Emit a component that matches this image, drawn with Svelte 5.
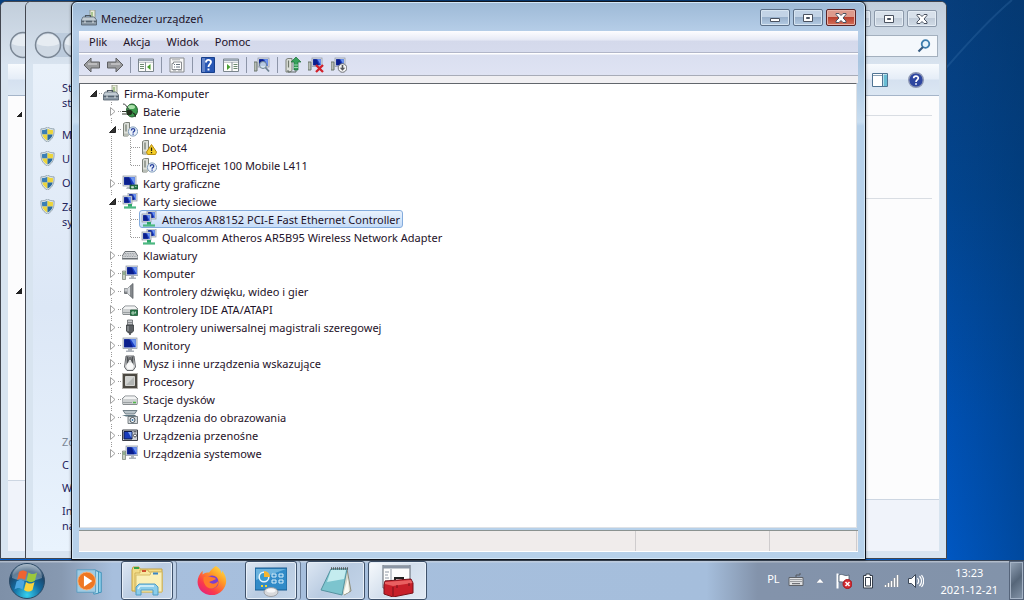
<script>
    let selected = "Atheros AR8152 PCI-E Fast Ethernet Controller";

    const menus = ["Plik", "Akcja", "Widok", "Pomoc"];

    const tools = [
        [{icon: "back", label: "Wstecz"}, {icon: "forward", label: "Dalej"}],
        [{icon: "treepane", label: "Drzewo konsoli"}],
        [{icon: "props", label: "Właściwości"}],
        [{icon: "help", label: "Pomoc"}, {icon: "actionpane", label: "Okienko akcji"}],
        [{icon: "scan", label: "Skanuj"}],
        [{icon: "update", label: "Aktualizuj"}, {icon: "uninstall", label: "Odinstaluj"}, {icon: "disable", label: "Wyłącz"}],
    ];

    const rows = [
        {level: 0, icon: "toolbox", name: "Firma-Komputer", open: true},
        {level: 1, icon: "battery", name: "Baterie"},
        {level: 1, icon: "unknown", name: "Inne urządzenia", open: true},
        {level: 2, icon: "warning", name: "Dot4"},
        {level: 2, icon: "unknown", name: "HPOfficejet 100 Mobile L411", last: true},
        {level: 1, icon: "gpu", name: "Karty graficzne"},
        {level: 1, icon: "network", name: "Karty sieciowe", open: true},
        {level: 2, icon: "network", name: "Atheros AR8152 PCI-E Fast Ethernet Controller"},
        {level: 2, icon: "network", name: "Qualcomm Atheros AR5B95 Wireless Network Adapter", last: true},
        {level: 1, icon: "keyboard", name: "Klawiatury"},
        {level: 1, icon: "computer", name: "Komputer"},
        {level: 1, icon: "sound", name: "Kontrolery dźwięku, wideo i gier"},
        {level: 1, icon: "ide", name: "Kontrolery IDE ATA/ATAPI"},
        {level: 1, icon: "usb", name: "Kontrolery uniwersalnej magistrali szeregowej"},
        {level: 1, icon: "monitor", name: "Monitory"},
        {level: 1, icon: "mouse", name: "Mysz i inne urządzenia wskazujące"},
        {level: 1, icon: "cpu", name: "Procesory"},
        {level: 1, icon: "disk", name: "Stacje dysków"},
        {level: 1, icon: "imaging", name: "Urządzenia do obrazowania"},
        {level: 1, icon: "portable", name: "Urządzenia przenośne"},
        {level: 1, icon: "computer", name: "Urządzenia systemowe", last: true},
    ];
</script>

{#snippet screen(x, y, w, h)}
    <rect {x} {y} width={w} height={h} fill="#dfe3ea" stroke="#8b939f" stroke-width=".7" />
    <rect x={x + 1.2} y={y + 1.2} width={w - 2.4} height={h - 2.4} fill="#1c3fc4" />
    <path d="M{x + 1.2} {y + 1.2}h{(w - 2.4) * 0.45}l{(w - 2.4) * 0.3} {h - 2.4}h-{(w - 2.4) * 0.75}z" fill="#0b1f8c" />
    <path d="M{x + w * 0.55} {y + 1.2}h{w * 0.45 - 1.2}v{h - 2.4}z" fill="#6f97f0" />
{/snippet}

{#snippet tower(x)}
    <path d="M{x} 2.5l2-1h4v12l-2 1.500h-4z" fill="#dcdfd9" stroke="#7c8179" />
    <path d="M{x + 2.500} 3.500v7" stroke="#6f776c" stroke-width="1.200" />
{/snippet}

{#snippet icon(name)}
    <svg class="icon" viewBox="0 0 16 16" aria-hidden="true">
        {#if name === "toolbox"}
            <path d="M9 0h5v9H9z" fill="#e9ecd9" stroke="#8b907f" stroke-width=".8" />
            <path d="M11 2v5" stroke="#6ca04a" />
            <path d="M4.500 7V5.500h5V7" fill="none" stroke="#4b5660" stroke-width="1.200" />
            <path d="M2 7h11l2.500 3v5H.5v-5z" fill="#8d9ba7" stroke="#4f5c68" stroke-width=".8" />
            <path d="M2 7.500h11l2 2.500H1z" fill="#c2ccd3" />
            <path d="M.5 11.500h15" stroke="#56636f" />
            <path d="M4 10.500v2.500M12 10.500v2.500" stroke="#e1e6e9" />
        {:else if name === "battery"}
            <ellipse cx="10" cy="7.500" rx="5.500" ry="6.500" fill="#3b9a4c" stroke="#235d2d" />
            <ellipse cx="9.500" cy="4" rx="3.500" ry="2" fill="#a9e0a8" />
            <path d="M1 1c3 0 3 2 4 3s2 2 2 4" fill="none" stroke="#444" />
            <path d="M5 7h4l2 2-2 3H5z" fill="#22301f" />
            <path d="M0 8.500h5M0 11h5" stroke="#30382e" stroke-width="1.200" />
            <path d="M11 10c2 1 3 2 2 4" fill="none" stroke="#22301f" stroke-width="1.300" />
        {:else if name === "unknown" || name === "warning"}
            {@render tower(1.5)}
            <path d="M2 12.500h5v2.500H2z" fill="#b8bdb5" />
            {#if name === "unknown"}
                <circle cx="11" cy="10.500" r="4.600" fill="#eaf1fa" stroke="#7f9bb9" />
                <path d="M9.400 9.400c0-2.400 3.400-2.200 3.300-.2 0 1.200-1.600 1.300-1.600 2.500M11.100 12.500v1.200" fill="none" stroke="#263f9c" stroke-width="1.300" />
            {:else}
                <path d="M10.500 5.500l5 7.500-1 2.500h-8l-1-2.500z" fill="#f5cf27" stroke="#b98c12" />
                <path d="M10.500 8.500v3.500M10.500 13v1.200" stroke="#29220a" stroke-width="1.300" />
            {/if}
        {:else if name === "gpu"}
            {@render screen(1, 1, 13, 10)}
            <path d="M5 12h4l1 2H4z" fill="#b4bac2" />
            <path d="M8 10h8v4H8z" fill="#287a4a" stroke="#174f2c" stroke-width=".7" />
            <path d="M9.500 11.500h2v1.500h-2zM13 11.500h1.500" fill="#d3e6d5" stroke="#c7dcca" stroke-width=".7" />
        {:else if name === "network"}
            {@render screen(6, 0, 9, 8)}
            {@render screen(1, 3, 9, 8)}
            <path d="M6 11h4v2.500h4v2H2v-2h4z" fill="#2da56a" />
            <path d="M2 14h12" stroke="#86dbac" stroke-width=".7" />
        {:else if name === "keyboard"}
            <path d="M3 4.500h10l3 5V12H0V9.500z" fill="#d6d8da" stroke="#6b7075" />
            <path d="M3 6.500h10M2.500 8h11M1.500 9.500h13" stroke="#9a9fa5" stroke-dasharray="1 .7" />
            <path d="M.5 11.500h15" stroke="#6b7075" />
        {:else if name === "computer"}
            {@render screen(4, 1, 12, 9.500)}
            <path d="M9 10.500h3v2h2v1.500H7v-1.500h2z" fill="#adb3bb" />
            <path d="M.5 6h3v8.500h-3z" fill="#c7cec4" stroke="#737c70" stroke-width=".7" />
            <path d="M2 7v3" stroke="#599256" />
        {:else if name === "sound"}
            <path d="M2.500 5.500h3L11 .5v15l-5.500-5h-3z" fill="#85898d" stroke="#5a5f64" stroke-width=".8" />
            <path d="M5.500 5.500L8 3.300v9.400l-2.500-2.200z" fill="#d7dadd" />
            <path d="M2.500 5.500h3v3h-3z" fill="#c6c9cc" />
        {:else if name === "ide" || name === "disk"}
            <path d="M3 5h10l3 3v4.500l-1 1H1l-1-1V8z" fill="#cdd0d1" stroke="#7b8083" stroke-width=".9" />
            <path d="M3 5.500h10l2 2.500H1z" fill="#f2f3f3" />
            <path d="M1 11.500h9" stroke="#9ba0a2" />
            {#if name === "ide"}
                <path d="M8.500 9h7v5.500h-7z" fill="#287a4a" stroke="#174f2c" stroke-width=".7" />
                <path d="M10 11h2v2h-2zM13.500 10.500v2" stroke="#d3e6d5" fill="none" stroke-width=".8" />
            {:else}
                <path d="M11 11.500h3" stroke="#4fb647" stroke-width="1.500" />
            {/if}
        {:else if name === "usb"}
            <path d="M5.500 1h5v5h-5z" fill="#c8cbce" stroke="#64686c" stroke-width=".8" />
            <path d="M7 3v1.200M9 3v1.200" stroke="#44484c" />
            <path d="M4.500 6h7v6l-2 2h-3l-2-2z" fill="#5b5f63" stroke="#34373a" stroke-width=".8" />
            <path d="M6 7v5" stroke="#a9adb0" />
            <path d="M8 14v2" stroke="#34373a" stroke-width="1.400" />
        {:else if name === "monitor"}
            {@render screen(1, 1, 14, 10.500)}
            <path d="M6 12h4v1.500h2V15H4v-1.500h2z" fill="#adb3bb" />
        {:else if name === "mouse"}
            <path d="M4 1h8l1.500 11-2.500 3.500H5L2.500 12z" fill="#d9dadb" stroke="#55585c" stroke-width=".9" />
            <path d="M4.500 1.500h2l.5 4-2.500 5zM11.500 1.500h-2l-.5 4 2.500 5z" fill="#4e5154" />
            <path d="M8 2v3" stroke="#47494c" stroke-width="1.500" />
            <ellipse cx="8" cy="11" rx="3.500" ry="3.500" fill="#fafafa" />
        {:else if name === "cpu"}
            <path d="M.5.500h15v15H.5z" fill="none" stroke="#6b675d" stroke-dasharray="1 1" />
            <path d="M1 1h14v14H1z" fill="#4c4942" />
            <path d="M3.500 3.500h9v9h-9z" fill="#d0d2d0" stroke="#e4e5e2" stroke-width=".8" />
            <path d="M12 4v8H4z" fill="#b2b5b3" />
        {:else if name === "imaging"}
            <path d="M1 1.500h14L12.500 5h-9z" fill="#b8c3c8" stroke="#586872" stroke-width=".8" />
            <path d="M0 6h13l2 1.500H4z" fill="#5d7681" />
            <path d="M6 7.500h9.500v7H6z" fill="#d5dadc" stroke="#5e666b" stroke-width=".8" />
            <circle cx="10.500" cy="11" r="2.500" fill="#fff" stroke="#46545e" />
            <circle cx="10.500" cy="11" r="1" fill="#3774a8" />
        {:else if name === "portable"}
            <path d="M.5 3h15v10.500H.5z" fill="#d1d4d8" stroke="#3b3e46" />
            <path d="M2 4.500h8v7.500H2z" fill="#173aba" stroke="#111c49" />
            <path d="M6 5h3.500v6z" fill="#7fa5f4" />
            <circle cx="13" cy="8.500" r="1.500" fill="#fff" stroke="#464950" />
            <path d="M11.500 4.800h3" stroke="#34363c" />
        {:else if name === "back" || name === "forward"}
            <path
                d={name === "back" ? "M0 8l7-7v4h8.500v6H7v4z" : "M16 8L9 1v4H.5v6H9v4z"}
                fill="#9a9b9d"
                stroke="#5f6063"
            />
            <path d="M4 7h9" stroke="#c8c9cb" stroke-width="1.500" />
        {:else if name === "treepane" || name === "actionpane"}
            <path d="M.5 2h15v12.500H.5z" fill="#fdfdfb" stroke="#7c868d" />
            <path d="M1 3.200h14" stroke="#98a5b4" stroke-width="2" />
            <path d="M1 5.500h14" stroke="#c8ccd0" />
            {#if name === "treepane"}
                <path d="M7.500 5v9" stroke="#8a9399" />
                <path d="M2 7.500h4M2 9.500h4M2 11.500h4" stroke="#6b8a70" />
                <path d="M12.500 7v6L9 10z" fill="#47a02f" />
            {:else}
                <path d="M9 5v9" stroke="#8a9399" />
                <path d="M10.500 7.500h4M10.500 9.500h4M10.500 11.500h4" stroke="#6b8a70" />
                <path d="M4 7v6l3.500-3z" fill="#47a02f" />
            {/if}
        {:else if name === "props"}
            <path d="M1 1h14v14H1z" fill="#f8f8f8" stroke="#85888c" />
            <path d="M3 2.800h8" stroke="#a9acb0" />
            <path d="M4.500 5h8v7.500H3V6.500h1.500z" fill="#fff" stroke="#898c90" />
            <path d="M5 7.500h1M7 7.500h4M5 10h1M7 10h4" stroke="#67727e" />
            <path d="M4 13.800h3M9 13.800h4" stroke="#a9acb0" />
        {:else if name === "help"}
            <path d="M1.500.5h13v15h-13z" fill="#2857b5" stroke="#173f8b" />
            <path d="M2 1h3v14H2z" fill="#6485c8" />
            <path d="M6 5.500c0-3.500 5-3.400 5-.4 0 2-2.500 2.200-2.500 4.900M8.500 11.500v2" fill="none" stroke="#fff" stroke-width="1.900" />
        {:else if name === "scan"}
            <path d="M0 5h3v9H0z" fill="#b8beb8" stroke="#6d766d" />
            {@render screen(4, 1, 11, 9)}
            <circle cx="9" cy="8" r="3.500" fill="#d6e7f2" fill-opacity=".85" stroke="#6d8190" />
            <path d="M11.500 10.500l3.500 4" stroke="#6d8190" stroke-width="1.800" />
        {:else if name === "update"}
            {@render tower(1)}
            <path d="M3 13v2h8v-2" fill="none" stroke="#5e6662" />
            <path d="M11 0l5 5h-3v8H9V5H6z" fill="#36a25b" stroke="#1e6c37" stroke-width=".7" />
            <path d="M9 8h4M9 10.500h4" stroke="#b8e7c5" stroke-width=".8" />
        {:else if name === "uninstall" || name === "disable"}
            <path d="M0 5h3v8H0z" fill="#b8beb8" stroke="#6d766d" />
            {@render screen(4, 1, 10, 8.500)}
            {#if name === "uninstall"}
                <path d="M8 8l7 7M15 8l-7 7" stroke="#d2202a" stroke-width="2.300" />
            {:else}
                <circle cx="11.500" cy="11" r="4.300" fill="#f4f4f4" stroke="#707377" />
                <path d="M11.500 8v4" stroke="#54575b" stroke-width="1.600" />
                <path d="M8.800 10.800h5.400l-2.700 3z" fill="#54575b" />
            {/if}
        {:else if name === "shield"}
            <path d="M8 0c2 1.500 4 2 7 2 .3 6-1 11-7 14C2 13 .7 8 1 2c3 0 5-.5 7-2z" fill="#dfe7ea" stroke="#7f929f" stroke-width=".8" />
            <path d="M8 1.800V8H2.500C2 6 2 4.500 2.300 3.300 4.500 3.300 6.500 2.800 8 1.800z" fill="#3b7fb5" />
            <path d="M8 1.800V8h5.500c.5-2 .5-3.500.2-4.700C11.500 3.300 9.500 2.800 8 1.800z" fill="#ecd53c" />
            <path d="M8 8v6.500C5 13 3.200 11 2.500 8z" fill="#ecd53c" />
            <path d="M8 8v6.500c3-1.500 4.800-3.500 5.500-6.500z" fill="#2a6a9f" />
        {/if}
    </svg>
{/snippet}

{#snippet captions(active)}
    <div class="captions" class:active>
        <button aria-label="Minimalizuj">
            <svg viewBox="0 0 16 12"><path d="M3.500 6.500h9v3h-9z" fill="#fff" stroke="#4a5260" /></svg>
        </button>
        <button aria-label="Maksymalizuj">
            <svg viewBox="0 0 16 12"><path d="M3.500 2.500h9v7h-9zM6.500 5.500h3v1h-3z" fill="#fff" fill-rule="evenodd" stroke="#4a5260" /></svg>
        </button>
        <button class="close" aria-label="Zamknij">
            <svg viewBox="0 0 16 12"><path d="M3 1.500h3l2 2 2-2h3v1L10 6l3 3v1.500h-3l-2-2-2 2H3V9l3-3-3-3.500z" fill="#fff" stroke="#4a5260" /></svg>
        </button>
    </div>
{/snippet}

{#snippet navButtons()}
    <svg class="nav" viewBox="0 0 60 30" aria-hidden="true">
        <path d="M14 3h30v24H14z" fill="#bccbdc" />
        <g stroke="#7b8795" stroke-width="1.500">
            <circle cx="15" cy="15" r="12.500" fill="#cfd9e4" />
            <circle cx="43" cy="15" r="12.500" fill="#cfd9e4" />
        </g>
        <path d="M4 14a11 10 0 0 1 22 0c-7 3-15 3-22 0z" fill="#e6ecf2" />
        <path d="M32 14a11 10 0 0 1 22 0c-7 3-15 3-22 0z" fill="#e6ecf2" />
    </svg>
{/snippet}

<div class="screen">
    <main class="desktop">
        <svg class="rays" viewBox="0 0 78 160" preserveAspectRatio="none" aria-hidden="true">
            <path d="M0 68Q40 22 66 0" fill="none" stroke="#3a73ad" stroke-width="2" opacity=".3" />
        </svg>

        <section class="window far" aria-label="Eksplorator">
            <header class="glass">{@render navButtons()}</header>
            <div class="pane">
                <div class="commands"></div>
                <div class="content marks">
                    <span class="mark"></span>
                    <span class="mark"></span>
                </div>
                <div class="details"></div>
            </div>
        </section>

        <section class="window back" aria-label="System">
            <header class="glass">
                {@render navButtons()}
                <div class="glass-right">
                    {@render captions(false)}
                    <div class="search">
                        <input type="search" aria-label="Szukaj" />
                        <svg viewBox="0 0 14 14"><circle cx="8.500" cy="5" r="3.800" fill="#e5f3fb" stroke="#3c7dad" stroke-width="1.800" /><path d="M6 8l-4.500 4.500" stroke="#355a80" stroke-width="2.200" /></svg>
                    </div>
                </div>
            </header>
            <div class="columns">
                <nav class="side">
                    <div class="links">
                        <a href="#home">St<br />st</a>
                        {#each ["M", "U", "O"] as link}
                            <a href="#{link}">{@render icon("shield")}{link}</a>
                        {/each}
                        <a href="#advanced">{@render icon("shield")}<span>Za<br />sy</span></a>
                    </div>
                    <div class="links lower">
                        <span class="dim">Zo</span>
                        <a href="#C">C</a>
                        <a href="#W">W</a>
                        <a href="#info">In<br />na</a>
                    </div>
                </nav>
                <div class="pane">
                    <div class="commands">
                        <svg viewBox="0 0 16 14"><path d="M.5.500h15v13H.5z" fill="#fff" stroke="#507493" /><path d="M1 2.500h9.500V1" fill="none" stroke="#8aa1b5" /><path d="M10.500 1v12" stroke="#507493" /><path d="M11.500 1.500h3.500v11.500h-3.500z" fill="#69bdd4" /></svg>
                        <svg class="round" viewBox="0 0 16 16"><circle cx="8" cy="8" r="7.300" fill="#2e46a0" stroke="#8e98b5" stroke-width="1.400" /><path d="M5.700 6.300c0-3 4.600-2.900 4.600-.2C10.300 8 8 7.800 8 10M8 11.200v1.600" fill="none" stroke="#fff" stroke-width="1.700" /></svg>
                    </div>
                    <div class="content lines">
                        <hr />
                        <hr />
                    </div>
                    <div class="details low"></div>
                </div>
            </div>
        </section>

        <section class="window front" aria-label="Menedżer urządzeń">
            <header class="titlebar">
                {@render icon("toolbox")}
                <h1>Menedżer urządzeń</h1>
                {@render captions(true)}
            </header>
            <nav class="menubar">
                {#each menus as menu}
                    <button>{menu}</button>
                {/each}
            </nav>
            <div class="toolbar">
                {#each tools as group}
                    <div class="group">
                        {#each group as tool}
                            <button aria-label={tool.label}>{@render icon(tool.icon)}</button>
                        {/each}
                    </div>
                {/each}
            </div>
            <ul class="tree">
                {#each rows as row}
                    <li>
                        {#if row.level > 0}
                            <span class="cell"></span>
                        {/if}
                        {#if row.level > 1}
                            <span class="cell line"></span>
                            <span class="cell line branch" class:last={row.last}></span>
                        {:else}
                            <span class="cell branch" class:line={row.level === 1} class:last={row.last}>
                                <svg viewBox="0 0 9 9">
                                    {#if row.open}
                                        <path d="M7.500 1.500v6h-6z" fill="#333" stroke="#222" />
                                    {:else}
                                        <path d="M2.500.5v8l4.500-4z" fill="#fff" stroke="#a0a0a0" />
                                    {/if}
                                </svg>
                            </span>
                        {/if}
                        <button class="item" class:selected={row.name === selected} on:click={() => selected = row.name}>
                            {@render icon(row.icon)}
                            {row.name}
                        </button>
                    </li>
                {/each}
            </ul>
            <footer class="status"><span></span><span></span><span></span></footer>
        </section>
    </main>

    <footer class="taskbar">
        <button class="start" aria-label="Start">
            <svg viewBox="0 0 38 38">
                <defs>
                    <radialGradient id="orb" cx=".5" cy=".9" r=".9">
                        <stop offset="0" stop-color="#35d0ee" />
                        <stop offset=".45" stop-color="#146a9f" />
                        <stop offset=".75" stop-color="#1d4468" />
                        <stop offset="1" stop-color="#8fa5b8" />
                    </radialGradient>
                </defs>
                <circle cx="19" cy="19" r="17.500" fill="url(#orb)" stroke="#2b4a66" />
                <path d="M4 16a15 14 0 0 1 30 0c-9 4-21 4-30 0z" fill="#fff" opacity=".3" />
                <path d="M11 10c3-2 5-2 8 0l-2 8c-3-2-5-2-8 0z" fill="#ee6430" />
                <path d="M20.500 10.500c3 2 5 2 8.500 0l-2 8c-3 2-5 2-8.500 0z" fill="#9bc83c" />
                <path d="M8.500 19.500c3-2 5-2 8 0l-2 8c-3-2-5-2-8 0z" fill="#4ba5e0" />
                <path d="M18 20c3 2 5 2 8.500 0l-2 8c-3 2-5 2-8.500 0z" fill="#fbd33b" />
            </svg>
        </button>
        <button class="task pinned player" aria-label="Windows Media Player">
            <svg viewBox="0 0 32 32">
                <path d="M22 5l6 2v21l-6 1z" fill="#8ed0ea" stroke="#3c8fb8" />
                <path d="M20 4l5 2v23l-5 1z" fill="#b6e2f2" stroke="#3c8fb8" />
                <path d="M2 4h20v24H2z" fill="#9fcbe3" stroke="#5c9dc0" />
                <circle cx="12.500" cy="16" r="9.500" fill="#ee7722" stroke="#f8b27b" />
                <path d="M9.500 10l9 6-9 6z" fill="#fff" />
            </svg>
        </button>
        <button class="task open stacked" aria-label="Eksplorator Windows">
            <svg viewBox="0 0 32 32">
                <path d="M1 5l1-3h6l1 2h22v22H1z" fill="#f2dc87" stroke="#c7a23e" />
                <path d="M3 3h5" stroke="#37a145" stroke-width="2" />
                <path d="M9 8V5h8l1 2h13v20H4V8z" fill="#f7e79f" stroke="#cfb159" />
                <path d="M11 6h4" stroke="#cf5330" stroke-width="2" />
                <path d="M19 10l1-3h11v20H5V10z" fill="#faf0b8" stroke="#d6bd68" />
                <path d="M22 8.500h5" stroke="#3985c4" stroke-width="2" />
                <path d="M5 30v-8l3-3h16l3 3v8h-5v-5H10v5z" fill="#8bcdea" stroke="#4e9bc5" />
                <path d="M7 24l2-3h14" fill="none" stroke="#dff5fc" stroke-width="1.500" />
            </svg>
        </button>
        <button class="task pinned firefox" aria-label="Firefox">
            <svg viewBox="0 0 32 32">
                <defs>
                    <linearGradient id="fox" x1="1" y1="0" x2=".2" y2="1">
                        <stop offset="0" stop-color="#fff14f" />
                        <stop offset=".4" stop-color="#ff9a25" />
                        <stop offset=".75" stop-color="#fb3b4b" />
                        <stop offset="1" stop-color="#e22080" />
                    </linearGradient>
                </defs>
                <path d="M20 0c5 3 6 6 6 8l1-3c6 8 5 16 0 21-7 8-21 6-25-3C-1 17 1 10 6 5v4c3-2 4-2 7-2 2-3 4-5 7-7z" fill="url(#fox)" />
                <circle cx="16" cy="17" r="7" fill="#7b3fd0" />
                <path d="M7 12c3-2 6-1 9 0 3 0 4 1 4 2-3 1-4 2-7 3 3 3 7 2 10-1-1 6-4 8-8 8-5 0-9-6-8-12z" fill="#ff7a2b" />
            </svg>
        </button>
        <button class="task open stacked" aria-label="Panel sterowania">
            <svg viewBox="0 0 32 32">
                <path d="M0 3h32v22H0z" fill="#318bc8" stroke="#1b5d92" />
                <path d="M1 4h30L1 15z" fill="#6bb3de" />
                <circle cx="9" cy="12" r="4.800" fill="#3a9cd1" stroke="#e8f5fc" stroke-width="1.500" />
                <path d="M9 12V6a6 6 0 0 1 6 6z" fill="#f5b52e" />
                <path d="M17 9h4v3h-4zM24 9h4v3h-4zM17 15h4v3h-4zM24 15h4v3h-4z" fill="none" stroke="#d8effb" />
                <path d="M6 21h2M10 21h2" stroke="#f5d52e" stroke-width="2" />
                <ellipse cx="16" cy="27" rx="7" ry="4.500" fill="#d8d9dc" stroke="#8f9398" stroke-width=".8" />
                <ellipse cx="16" cy="25.500" rx="4.500" ry="2" fill="#f7f7f8" />
            </svg>
        </button>
        <button class="task open" aria-label="Notatnik">
            <svg viewBox="0 0 32 32">
                <path d="M11 4h16l4 22-7 4z" fill="#d8d8ca" stroke="#8d8d7d" />
                <path d="M11 4h16l-5 26-21-5z" fill="#7cc4ce" stroke="#55929f" />
                <path d="M11 5h15l-2 9-17 3z" fill="#c4ecef" />
                <path d="M23 30l5-17 1 14z" fill="#fafaf4" />
                <path d="M11 3.500h17" stroke="#555c60" stroke-width="2.500" stroke-dasharray="1 1" />
            </svg>
        </button>
        <button class="task open current" aria-label="Menedżer urządzeń">
            <svg viewBox="0 0 32 32">
                <path d="M1 0h27v23H1z" fill="#fdfdfd" stroke="#5f6770" />
                <path d="M1 2h27" stroke="#8b96a5" stroke-width="3" />
                <path d="M9 4v18M3 7h4M3 10h3M3 13h4M3 16h3" stroke="#8f98a5" />
                <path d="M13 15v-2h8v2" fill="none" stroke="#222" stroke-width="2" />
                <path d="M3 16l26-2 2 4v10l-20 4-9-3V20z" fill="#c8202a" stroke="#79121a" />
                <path d="M3 17l26-2 1.500 3L11 21l-8-2z" fill="#e96061" />
                <path d="M11 22v9M15 20v3M27 18v3" stroke="#79121a" />
            </svg>
        </button>

        <div class="tray">
            <span class="lang">PL</span>
            <svg viewBox="0 0 16 16"><path d="M8 4V2h4V0" fill="none" stroke="#55585e" /><path d="M1 4.500h14v8H1z" fill="#dfe0e2" stroke="#5f6268" /><path d="M2.500 6.500h11M2.500 8.500h11" stroke="#55585e" stroke-dasharray="1 1" /><path d="M4 10.700h8" stroke="#55585e" /></svg>
            <svg class="up" viewBox="0 0 8 5"><path d="M0 5l4-4.500L8 5z" fill="#fff" stroke="#50617a" stroke-width=".4" /></svg>
            <svg viewBox="0 0 16 16"><path d="M1.500.5v15" stroke="#fff" stroke-width="2" /><path d="M3 2c4-2 5 2 10 0v7c-4 2-6-1-10 0z" fill="#fff" stroke="#4d5a6c" stroke-width=".8" /><circle cx="11.500" cy="11" r="4.500" fill="#d52b31" stroke="#a11a20" /><path d="M9.500 9l4 4M13.500 9l-4 4" stroke="#fff" stroke-width="1.500" /></svg>
            <svg viewBox="0 0 16 16"><path d="M6 1h4v1.500h2.500v12.500h-9V2.500H6z" fill="#fff" stroke="#333c49" /><path d="M5.500 4.500h5v8.500h-5z" fill="#fff" stroke="#333c49" /></svg>
            <svg viewBox="0 0 16 16"><path d="M1.500 14v-2M4.500 14v-4M7.500 14V8M10.500 14V5M13.500 14V2" stroke="#3c4858" stroke-width="3" /><path d="M1.500 14v-2M4.500 14v-4M7.500 14V8M10.500 14V5M13.500 14V2" stroke="#fff" stroke-width="2" /></svg>
            <svg viewBox="0 0 16 16"><path d="M.5 5.500h3l4-4v13l-4-4h-3z" fill="#fff" stroke="#3c4858" /><path d="M9.500 5c1.500 2 1.500 4 0 6M11.500 3c2.500 3 2.500 7 0 10M13.500 2c3 4 3 8 0 12" fill="none" stroke="#fff" stroke-width="1.200" /></svg>
            <div class="clock"><time>13:23</time><time>2021-12-21</time></div>
        </div>
        <button class="peek" aria-label="Pokaż pulpit"></button>
    </footer>
</div>

<style>
    :global(body) {
        margin: 0;
    }

    .screen {
        height: 100vh;
        display: flex;
        flex-direction: column;
        overflow: hidden;
        font: 11px/15px "Noto Sans", "Open Sans", sans-serif;
        color: #1e1228;
    }

    .screen * {
        box-sizing: border-box;
    }

    button {
        padding: 0;
        border: 0;
        background: none;
        font: inherit;
        color: inherit;
    }

    svg {
        display: block;
        flex: none;
    }

    .icon {
        width: 16px;
        height: 16px;
    }

    .desktop {
        position: relative;
        flex: 1;
        min-height: 0;
        background: linear-gradient(90deg, transparent 92%, #00306060), linear-gradient(#073e7c, #024590 35%, #0051b4 75%, #0058c4);
    }

    .rays {
        position: absolute;
        top: 0;
        right: 0;
        width: 78px;
        height: 160px;
    }

    .window {
        position: absolute;
        top: 1px;
        bottom: 1px;
        display: flex;
        flex-direction: column;
        padding: 0 7px 7px;
        border: 1px solid #42464f;
        border-radius: 6px 6px 0 0;
        background: #d8e4f0;
    }

    .far {
        left: 0;
        width: 50%;
    }

    .back {
        left: 25px;
        width: 90%;
    }

    .front {
        left: 71px;
        right: 158px;
        bottom: 0;
        border-color: #10141c;
        background: linear-gradient(#9db9d6, #b6cee8 30px, #a9c5e0 60px, #c8ddf0 120px, #b7d1ea 124px);
        box-shadow: inset 0 0 0 1px #d3e6f6, 0 0 3px #0006;
    }

    .glass {
        display: flex;
        justify-content: space-between;
        height: 62px;
        flex: none;
        background: linear-gradient(#c2cedb, #d8e3ef);
        margin: 0 -7px;
        padding: 0 8px 0 7px;
        border-radius: 5px 5px 0 0;
    }

    .nav {
        width: 60px;
        height: 30px;
        margin-top: 28px;
    }

    .glass-right {
        display: flex;
        flex-direction: column;
        align-items: flex-end;
        gap: 8px;
        padding-top: 8px;
    }

    .captions {
        display: flex;
        gap: 3px;
        padding-right: 1px;
    }

    .captions button {
        display: grid;
        place-items: center;
        width: 30px;
        height: 17px;
        border: 1px solid #8c99aa;
        border-radius: 2px;
        background: linear-gradient(#d8e1eb 45%, #c1ccd9 50%, #d2dce7);
        box-shadow: inset 0 0 0 1px #e4ecf4;
    }

    .captions svg {
        width: 16px;
        height: 12px;
    }

    .captions.active button {
        border-color: #5d7088;
        background: linear-gradient(#c2d3e6 45%, #98b0cb 50%, #b4cbe3);
        box-shadow: inset 0 0 0 1px #d6e4f1;
    }

    .captions.active .close {
        border-color: #5a2325;
        background: linear-gradient(#dd9a8c 45%, #b93f2e 50%, #d3705a);
        box-shadow: inset 0 0 0 1px #e8b2a7;
    }

    .search {
        display: flex;
        align-items: center;
        width: 180px;
        height: 22px;
        padding-right: 6px;
        border: 1px solid #a3b0be;
        background: #f4f8fc;
    }

    .search input {
        flex: 1;
        min-width: 0;
        border: 0;
        outline: 0;
        background: none;
    }

    .search svg {
        width: 14px;
        height: 14px;
    }

    .columns {
        flex: 1;
        display: flex;
        min-height: 0;
    }

    .side {
        width: 180px;
        display: flex;
        flex-direction: column;
        justify-content: space-between;
        padding: 16px 0 18px 7px;
        background: linear-gradient(#e9f1fa, #dce7f6 50%, #e9f3fd);
    }

    .links {
        display: flex;
        flex-direction: column;
        gap: 9px;
        padding-left: 22px;
    }

    .links a {
        display: flex;
        gap: 7px;
        color: #24245c;
        text-decoration: none;
    }

    .links a:first-child {
        margin-bottom: 8px;
    }

    .links .icon {
        width: 15px;
        height: 15px;
        margin-left: -22px;
    }

    .links.lower {
        gap: 8px;
    }

    .dim {
        color: #7b8795;
    }

    .pane {
        flex: 1;
        display: flex;
        flex-direction: column;
        min-height: 0;
        background: #fcfcfd;
    }

    .commands {
        display: flex;
        justify-content: flex-end;
        align-items: center;
        gap: 20px;
        height: 32px;
        flex: none;
        padding-right: 15px;
        border-bottom: 1px solid #a5b5c9;
        background: linear-gradient(#f8fbfe, #e5edf7 48%, #d5e1f0 52%, #dce7f3);
    }

    .commands svg {
        width: 16px;
        height: 14px;
    }

    .commands .round {
        height: 16px;
    }

    .content {
        flex: 1;
    }

    .marks {
        padding: 15px 8px;
    }

    .mark {
        display: block;
        width: 6px;
        height: 6px;
        margin-bottom: 171px;
        background: linear-gradient(135deg, transparent 50%, #222 50%);
    }

    .lines {
        padding: 19px 7px;
    }

    .lines hr {
        margin: 0 0 82px;
        border: 0;
        border-top: 1px solid #d9dde3;
    }

    .details {
        height: 71px;
        border-top: 1px solid #cdd6e2;
        background: #f0f3fa;
    }

    .details.low {
        height: 52px;
    }

    .titlebar {
        display: flex;
        align-items: center;
        height: 29px;
        flex: none;
        padding: 3px 1px 0 2px;
    }

    h1 {
        flex: 1;
        margin: 0 0 0 4px;
        font: inherit;
    }

    .titlebar .captions {
        margin-bottom: 1px;
    }

    .menubar {
        display: flex;
        gap: 16px;
        height: 22px;
        flex: none;
        padding: 0 10px;
        border-bottom: 1px solid #b1b6c8;
        background: linear-gradient(#fdfdff, #e8ebf6 40%, #d4d9eb 50%, #d6dbed);
    }

    .toolbar {
        display: flex;
        align-items: center;
        height: 30px;
        flex: none;
        padding: 0 5px 6px;
        background: linear-gradient(#fff 1px, #dadff0 2px, #dfe3f3 22px, #a8acb8 22px, #a8acb8 23px, #f0eff2 23px);
    }

    .group {
        display: flex;
        gap: 7px;
    }

    .group + .group {
        margin-left: 7px;
        padding-left: 7px;
        border-left: 1px solid #8d95a8;
    }

    .tree {
        flex: 1;
        min-height: 0;
        overflow: auto;
        margin: 0 1px 2px 0;
        padding: 0 4px;
        list-style: none;
        border: 1px solid #dfe2e6;
        border-top-color: #62666c;
        border-left-color: #62666c;
        background: #fff;
    }

    .tree li {
        display: flex;
        height: 18px;
    }

    .cell {
        display: grid;
        place-items: center;
        width: 19px;
        height: 18px;
        flex: none;
        background-repeat: repeat-y, no-repeat;
        background-position: 8px 0, 9px 9px;
    }

    .cell svg {
        width: 9px;
        height: 9px;
        background: #fff;
        box-shadow: 0 2px #fff, 0 -2px #fff;
    }

    .line {
        background-image: linear-gradient(#999 50%, transparent 50%);
        background-size: 1px 2px;
    }

    .branch {
        background-image: none, repeating-linear-gradient(90deg, #999 0 1px, transparent 1px 2px);
        background-size: 1px 2px, 10px 1px;
    }

    .line.branch {
        background-image: linear-gradient(#999 50%, transparent 50%), repeating-linear-gradient(90deg, #999 0 1px, transparent 1px 2px);
    }

    .line.branch.last {
        background-size: 1px 10px, 10px 1px;
        background-repeat: no-repeat;
        background-image: repeating-linear-gradient(#999 0 1px, transparent 1px 2px), repeating-linear-gradient(90deg, #999 0 1px, transparent 1px 2px);
    }

    .item {
        display: flex;
        align-items: center;
        gap: 5px;
        height: 18px;
        margin-left: -2px;
        padding: 0 2px 0 1px;
        border: 1px solid transparent;
        border-radius: 3px;
        white-space: nowrap;
    }

    .item.selected {
        border-color: #84acdd;
        background: linear-gradient(#e9f2fd, #c5dcf8);
    }

    .status {
        display: flex;
        height: 22px;
        flex: none;
        padding-right: 1px;
        border-top: 1px solid #8b9290;
        border-bottom: 1px solid #fff;
        background: #f0eceb;
    }

    .status span {
        flex: 2;
        border-right: 1px solid #cfcccd;
    }

    .status span:first-child {
        flex: 8.4;
        flex-basis: 0;
    }

    .status span:nth-child(3) {
        flex: 1.3;
    }

    .taskbar {
        display: flex;
        height: 40px;
        flex: none;
        border-top: 1px solid #3a4657;
        background: linear-gradient(#ffffff60 1px, transparent 2px), linear-gradient(90deg, #7e90a8, #8799b1 6%, #a7bfdd 11%, #a5bedc 69%, #8393ab 74%, #8293aa);
    }

    .start {
        width: 70px;
        padding-left: 8px;
    }

    .start svg {
        width: 38px;
        height: 38px;
    }

    .task {
        display: grid;
        place-items: center;
        width: 59px;
        margin-right: 3px;
        border: 1px solid transparent;
        border-radius: 3px;
    }

    .task svg {
        width: 32px;
        height: 32px;
    }

    .task.pinned svg {
        width: 30px;
        height: 30px;
    }

    .player {
        width: 48px;
        padding-right: 8px;
    }

    .firefox {
        width: 60px;
    }

    .open {
        border-color: #3f526b;
        background: linear-gradient(135deg, #dde7f3, #b9cbe1 50%, #c4d5e9);
        box-shadow: inset 0 0 0 1px #e8f0f9;
    }

    .stacked {
        width: 52px;
        margin-right: 9px;
        box-shadow: inset 0 0 0 1px #e8f0f9, 3px 0 0 #bdcfe5, 4px 0 0 #6b7e98;
    }

    .current {
        background: linear-gradient(135deg, #f7fafd, #d2deec 50%, #e2eaf4);
    }

    .tray {
        display: flex;
        align-items: center;
        gap: 8px;
        margin-left: auto;
        color: #fff;
    }

    .tray svg {
        width: 16px;
        height: 16px;
    }

    .tray .up {
        width: 8px;
        height: 5px;
        margin: 0 4px;
    }

    .lang {
        padding-bottom: 4px;
    }

    .clock {
        display: flex;
        flex-direction: column;
        align-items: center;
        gap: 2px;
        margin: 0 11px 0 9px;
    }

    .peek {
        width: 15px;
        border: 1px solid #55647a;
        background: linear-gradient(135deg, #93a3b7, #566679 50%, #8596aa);
        box-shadow: inset 0 0 0 1px #a5b3c5;
    }
</style>
